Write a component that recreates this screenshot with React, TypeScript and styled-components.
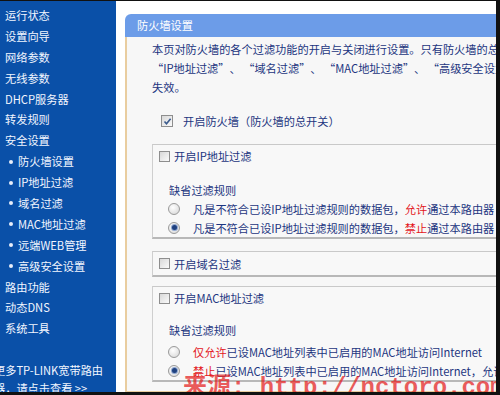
import React from "react";
import styled, { createGlobalStyle } from "styled-components";

const Global = createGlobalStyle`
  html, body { margin: 0; padding: 0; background: #fff; }
  body { font-family: "Noto Sans CJK SC", "Noto Sans", sans-serif; }
`;

const Frame = styled.div`
  position: relative;
  width: 500px;
  height: 395px;
  box-sizing: border-box;
  border-top: 1px solid #111;
  border-right: 4px solid #111;
  border-bottom: 3px solid #111;
  display: flex;
  overflow: hidden;
  background: #fff;
  font-size: 11.2px;
`;

const Sidebar = styled.nav`
  width: 116px;
  flex: none;
  background: #0a50a8;
  padding-top: 4px;
  display: flex;
  flex-direction: column;
  overflow: hidden;
`;

const NavItem = styled.div<{ $sub?: boolean }>`
  height: 20.9px;
  line-height: 20.9px;
  padding-left: ${(p) => (p.$sub ? "9px" : "5px")};
  color: #f2f6ff;
  white-space: nowrap;
  display: flex;
  align-items: center;
  gap: 5px;
`;

const Bullet = styled.span`
  width: 4px;
  height: 4px;
  border-radius: 50%;
  background: #e8eefa;
  display: inline-block;
`;

const MoreLink = styled.div`
  margin-top: 22px;
  margin-left: -6px;
  color: #f2f6ff;
  line-height: 18px;
  white-space: nowrap;
`;

const Main = styled.main`
  flex: 1;
  padding: 13px 0 0 9px;
  min-width: 0;
`;

const Panel = styled.section`
  width: 430px;
`;

const PanelHeader = styled.div`
  height: 23px;
  line-height: 23px;
  background: #6c9ce8;
  border-radius: 6px 0 0 0;
  color: #fff;
  padding-left: 12px;
`;

const PanelBody = styled.div`
  background: #f7f7f7;
  border-left: 2px solid #e9cd9f;
  border-bottom: 2px solid #e9cd9f;
  padding: 3px 0 9px 25px;
`;

const Intro = styled.p`
  margin: 0;
  color: #1c3580;
  line-height: 19px;
  white-space: nowrap;
`;

const Quote = styled.span<{ $open?: boolean }>`
  display: inline-block;
  width: 11.2px;
  text-align: ${(p) => (p.$open ? "right" : "left")};
`;

const CheckRow = styled.label<{ $indent?: number; $height?: number }>`
  display: flex;
  align-items: center;
  gap: ${(p) => (p.$indent ? "10px" : "4px")};
  height: ${(p) => p.$height ?? 22}px;
  padding-left: ${(p) => p.$indent ?? 6}px;
  color: #1c3580;
  white-space: nowrap;
`;

const FirewallRow = styled.div`
  margin-top: 14px;
  margin-bottom: 13px;
`;

const Box = styled.div<{ $gap?: number }>`
  margin-top: ${(p) => p.$gap ?? 0}px;
  border-top: 1px solid #c9c9c9;
  border-left: 1px solid #cfcfcf;
  border-bottom: 2px solid #b8b8b8;
  background: #f8f8f8;
`;

const RuleLabel = styled.div<{ $top: number }>`
  margin-top: ${(p) => p.$top}px;
  padding-left: 16px;
  line-height: 17px;
  color: #1c3580;
`;

const RadioRow = styled.div<{ $top?: number }>`
  display: flex;
  align-items: center;
  height: 19px;
  margin-top: ${(p) => p.$top ?? 0}px;
  padding-left: 15px;
  gap: 13px;
  color: #1c3580;
  white-space: nowrap;
`;

const Red = styled.span`
  color: #e3141b;
`;

const CheckBoxBox = styled.span<{ $size?: number }>`
  width: ${(p) => p.$size ?? 11}px;
  height: ${(p) => p.$size ?? 11}px;
  box-sizing: border-box;
  border: 1px solid #8e8e8e;
  background: linear-gradient(135deg, #d8d8d8, #fafafa);
  display: inline-flex;
  align-items: center;
  justify-content: center;
  flex: none;
`;

const RadioCircle = styled.span<{ $on?: boolean }>`
  width: 12px;
  height: 12px;
  box-sizing: border-box;
  border-radius: 50%;
  border: 1px solid #9a9a9a;
  background: radial-gradient(circle at 40% 35%, #ffffff, #d4d4d4);
  display: inline-flex;
  align-items: center;
  justify-content: center;
  flex: none;
  &::after {
    content: "";
    display: ${(p) => (p.$on ? "block" : "none")};
    width: 5px;
    height: 5px;
    border-radius: 50%;
    background: #1f4180;
    box-shadow: 0 0 0 1px #8fa6cf;
  }
`;

const Watermark = styled.div`
  position: absolute;
  left: 183px;
  top: 373px;
  color: rgba(228, 30, 30, 0.72);
  font-family: "Liberation Mono", "Noto Sans CJK SC", monospace;
  font-size: 24px;
  line-height: 28px;
  font-weight: bold;
  white-space: nowrap;
  pointer-events: none;
`;

const CheckBox: React.FC<{ checked?: boolean; size?: number }> = ({ checked, size }) => (
  <CheckBoxBox $size={size}>
    {checked && (
      <svg width="9" height="9" viewBox="0 0 9 9">
        <path d="M1.5 4.5 L3.5 6.8 L7.6 1.8" fill="none" stroke="#3a5a8c" strokeWidth="1.6" />
      </svg>
    )}
  </CheckBoxBox>
);

const Q: React.FC<{ children: React.ReactNode }> = ({ children }) => (
  <>
    <Quote $open>“</Quote>
    {children}
    <Quote>”</Quote>
  </>
);

const mainNav = ["运行状态", "设置向导", "网络参数", "无线参数", "DHCP服务器", "转发规则", "安全设置"];
const subNav = ["防火墙设置", "IP地址过滤", "域名过滤", "MAC地址过滤", "远端WEB管理", "高级安全设置"];
const tailNav = ["路由功能", "动态DNS", "系统工具"];

export default function App() {
  return (
    <>
      <Global />
      <Frame>
        <Sidebar>
          {mainNav.map((t) => (
            <NavItem key={t}>{t}</NavItem>
          ))}
          {subNav.map((t) => (
            <NavItem key={t} $sub>
              <Bullet />
              {t}
            </NavItem>
          ))}
          {tailNav.map((t) => (
            <NavItem key={t}>{t}</NavItem>
          ))}
          <MoreLink>
            更多TP-LINK宽带路由
            <br />
            器，请点击查看 &gt;&gt;
          </MoreLink>
        </Sidebar>
        <Main>
          <Panel>
            <PanelHeader>防火墙设置</PanelHeader>
            <PanelBody>
              <Intro>
                本页对防火墙的各个过滤功能的开启与关闭进行设置。只有防火墙的总开关是开启的时候，
                <br />
                <Q>IP地址过滤</Q>、 <Q>域名过滤</Q>、 <Q>MAC地址过滤</Q>、 <Q>高级安全设置</Q>
                <br />
                失效。
              </Intro>
              <FirewallRow>
                <CheckRow $indent={9} $height={20}>
                  <CheckBox checked size={12} />
                  开启防火墙（防火墙的总开关）
                </CheckRow>
              </FirewallRow>
              <Box>
                <CheckRow>
                  <CheckBox />
                  开启IP地址过滤
                </CheckRow>
                <RuleLabel $top={15}>缺省过滤规则</RuleLabel>
                <RadioRow>
                  <RadioCircle />
                  <span>
                    凡是不符合已设IP地址过滤规则的数据包，<Red>允许</Red>通过本路由器
                  </span>
                </RadioRow>
                <RadioRow>
                  <RadioCircle $on />
                  <span>
                    凡是不符合已设IP地址过滤规则的数据包，<Red>禁止</Red>通过本路由器
                  </span>
                </RadioRow>
              </Box>
              <Box $gap={12}>
                <CheckRow $height={23}>
                  <CheckBox />
                  开启域名过滤
                </CheckRow>
              </Box>
              <Box $gap={9}>
                <CheckRow>
                  <CheckBox />
                  开启MAC地址过滤
                </CheckRow>
                <RuleLabel $top={13}>缺省过滤规则</RuleLabel>
                <RadioRow $top={3}>
                  <RadioCircle />
                  <span>
                    <Red>仅允许</Red>已设MAC地址列表中已启用的MAC地址访问Internet
                  </span>
                </RadioRow>
                <RadioRow>
                  <RadioCircle $on />
                  <span>
                    <Red>禁止</Red>已设MAC地址列表中已启用的MAC地址访问Internet，允许
                  </span>
                </RadioRow>
              </Box>
            </PanelBody>
          </Panel>
        </Main>
        <Watermark>来源: http://nctoro.com</Watermark>
      </Frame>
    </>
  );
}
